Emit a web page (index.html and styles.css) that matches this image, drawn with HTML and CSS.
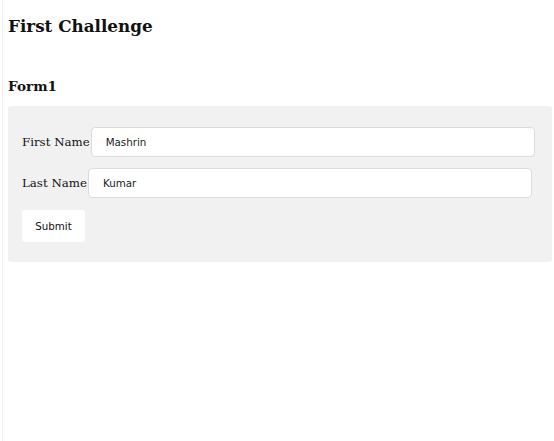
FILE: index.html
```html
<!DOCTYPE html>
<html>
<head>
<meta charset="utf-8">
<link rel="stylesheet" href="styles.css">
</head>
<body>
<div class="page">
  <h1 class="title">First Challenge</h1>
  <h2 class="subtitle">Form1</h2>
  <form class="form-box">
    <div class="row">
      <label class="label">First Name</label>
      <input class="field" type="text" value="Mashrin">
    </div>
    <div class="row">
      <label class="label">Last Name</label>
      <input class="field" type="text" value="Kumar">
    </div>
    <button class="submit" type="button">Submit</button>
  </form>
</div>
</body>
</html>
```
FILE: styles.css
```css
html, body {
  margin: 0;
  padding: 0;
  background: #fff;
}
body {
  font-family: "DejaVu Serif", serif;
  color: #111;
}
.page {
  margin-left: 2px;
  border-left: 1px solid #f0f0f0;
  padding: 1px 2px 0 5px;
  min-height: 440px;
}
.title {
  font-size: 16.8px;
  font-weight: bold;
  margin: 14px 0 0 0;
  line-height: 22px;
}
.subtitle {
  font-size: 13.6px;
  font-weight: bold;
  margin: 40px 0 0 0;
  line-height: 18px;
}
.form-box {
  margin-top: 11px;
  background: #f1f1f1;
  border-radius: 3px;
  padding: 21px 14px 20px 14px;
  display: flex;
  flex-direction: column;
  align-items: flex-start;
  gap: 11px;
}
.row {
  display: flex;
  align-items: center;
  gap: 1px;
}
.label {
  font-size: 11.8px;
  white-space: nowrap;
}
.field {
  flex-shrink: 0;
  width: 444px;
  height: 30px;
  box-sizing: border-box;
  border: 1px solid #dcdcdc;
  border-radius: 4px;
  background: #fff;
  padding: 0 14px;
  font-family: "DejaVu Sans", sans-serif;
  font-size: 10.3px;
  color: #222;
  outline: none;
}
.submit {
  margin-top: 1px;
  width: 63px;
  height: 32px;
  border: none;
  border-radius: 3px;
  background: #fff;
  font-family: "DejaVu Sans", sans-serif;
  font-size: 10.3px;
  color: #111;
}
```
